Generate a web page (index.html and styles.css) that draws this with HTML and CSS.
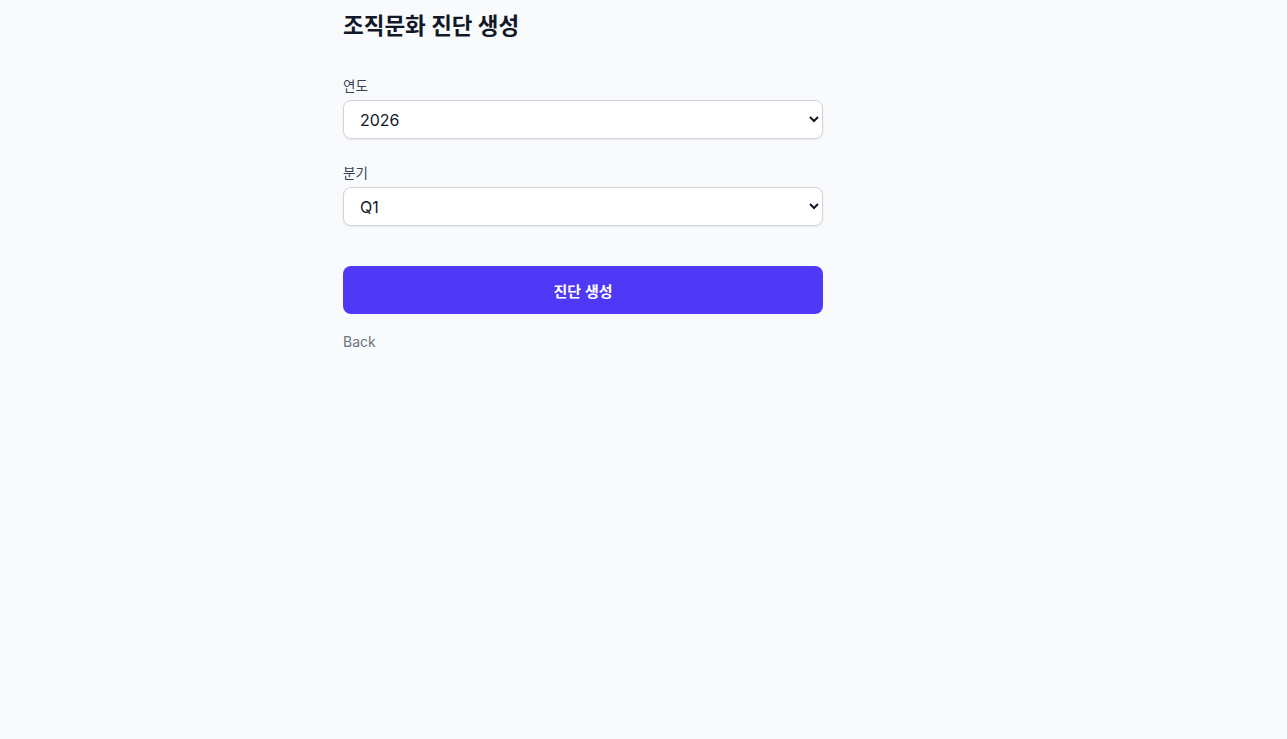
FILE: index.html
```html
<!DOCTYPE html>
<html lang="ko">
<head>
<meta charset="utf-8">
<title>조직문화 진단 생성</title>
<link rel="stylesheet" href="styles.css">
</head>
<body>
<main class="page">
  <div class="panel">
    <h1 class="title">조직문화 진단 생성</h1>
    <form class="form">
      <div class="field">
        <label class="label" for="year">연도</label>
        <select id="year" class="select">
          <option>2026</option>
          <option>2025</option>
        </select>
      </div>
      <div class="field">
        <label class="label" for="quarter">분기</label>
        <select id="quarter" class="select">
          <option>Q1</option>
          <option>Q2</option>
          <option>Q3</option>
          <option>Q4</option>
        </select>
      </div>
      <button type="button" class="submit">진단 생성</button>
    </form>
    <a class="back" href="#">Back</a>
  </div>
</main>
</body>
</html>
```

FILE: styles.css
```css
html, body {
  margin: 0;
  padding: 0;
  background: #f8fafc;
  font-family: Inter, "Noto Sans CJK KR", sans-serif;
  color: #111827;
}

.page {
  padding: 8px 0 0 343px;
  min-height: 731px;
}

.panel {
  width: 480px;
  display: flex;
  flex-direction: column;
}

.title {
  margin: 0 0 32px;
  font-size: 22.5px;
  line-height: 36px;
  font-weight: 700;
  color: #111827;
  font-family: Inter, "Noto Sans CJK KR", sans-serif;
}

.form {
  display: flex;
  flex-direction: column;
}

.field {
  display: flex;
  flex-direction: column;
  margin-bottom: 24px;
}

.label {
  font-size: 13.5px;
  line-height: 20px;
  color: #374151;
  margin-bottom: 4px;
}

.select {
  height: 39px;
  border: 1px solid #d1d5db;
  border-radius: 8px;
  background: #ffffff;
  box-shadow: 0 1px 2px rgba(0, 0, 0, 0.08);
  padding: 0 8px 0 12px;
  font-size: 16px;
  font-family: Inter, "Noto Sans CJK KR", sans-serif;
  color: #111827;
}

.submit {
  margin-top: 16px;
  height: 48px;
  border: none;
  border-radius: 8px;
  background: #4f39f6;
  color: #ffffff;
  font-size: 15px;
  font-weight: 600;
  font-family: Inter, "Noto Sans CJK KR", sans-serif;
}

.back {
  margin-top: 18px;
  font-size: 14px;
  line-height: 20px;
  color: #6b7280;
  text-decoration: none;
  align-self: flex-start;
}
```
